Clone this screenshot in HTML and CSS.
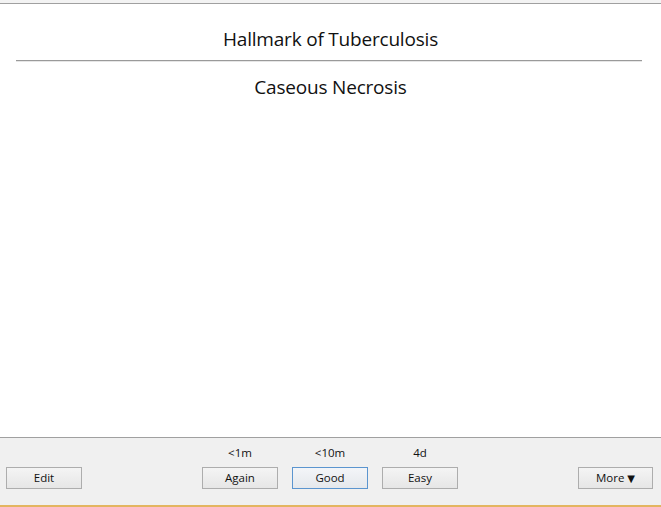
FILE: index.html
```html
<!DOCTYPE html>
<html>
<head>
<meta charset="utf-8">
<link rel="stylesheet" href="styles.css">
</head>
<body>
<div class="app">
  <main class="card">
    <div class="question">Hallmark of Tuberculosis</div>
    <hr class="divider">
    <div class="answer">Caseous Necrosis</div>
  </main>
  <footer class="bar">
    <div class="side left"><button class="btn">Edit</button></div>
    <div class="answers">
      <div class="ans"><span class="due">&lt;1m</span><button class="btn">Again</button></div>
      <div class="ans"><span class="due">&lt;10m</span><button class="btn focus">Good</button></div>
      <div class="ans"><span class="due">4d</span><button class="btn">Easy</button></div>
    </div>
    <div class="side right"><button class="btn more">More <span class="tri">&#9660;</span></button></div>
  </footer>
</div>
</body>
</html>
```
FILE: styles.css
```css
html, body {
  margin: 0;
  padding: 0;
  height: 100%;
}
body {
  font-family: "Open Sans", "Noto Sans", sans-serif;
  color: #000;
  background: #fff;
}
.app {
  height: 507px;
  display: flex;
  flex-direction: column;
  box-sizing: border-box;
  border-top: 3px solid #f3f3f3;
}
.card {
  flex: 1;
  border-top: 1px solid #a0a0a0;
  background: #fff;
  text-align: center;
  font-size: 19px;
  padding-top: 23px;
}
.question, .answer {
  line-height: 24px;
  letter-spacing: -0.2px;
  color: #111;
}
.divider {
  margin: 9px 19px 13px 16px;
  border: 0;
  border-top: 1px solid #9a9a9a;
  border-bottom: 1px solid #e6e6e6;
  height: 0;
}
.bar {
  height: 70px;
  box-sizing: border-box;
  border-top: 1px solid #a0a0a0;
  border-bottom: 2px solid #e3b560;
  background: #f0f0f0;
  display: flex;
  align-items: flex-end;
  justify-content: space-between;
  padding: 0 8px 16px 6px;
}
.answers {
  display: flex;
  gap: 14px;
}
.ans {
  display: flex;
  flex-direction: column;
  align-items: center;
}
.due {
  font-size: 11.5px;
  line-height: 15px;
  margin-bottom: 7px;
  color: #111;
}
.btn {
  width: 76px;
  height: 22px;
  box-sizing: border-box;
  border: 1px solid #adadad;
  background: linear-gradient(#f4f4f4, #e6e6e6);
  font-family: "Open Sans", "Noto Sans", sans-serif;
  font-size: 11.5px;
  color: #111;
  padding: 0;
  margin: 0;
  line-height: 18px;
}
.btn.more {
  width: 75px;
}
.btn.focus {
  border-color: #5b95cf;
  background: linear-gradient(#f3f5f8, #e5e8ec);
}
.tri {
  font-size: 10px;
  font-family: "DejaVu Sans", sans-serif;
}
```
